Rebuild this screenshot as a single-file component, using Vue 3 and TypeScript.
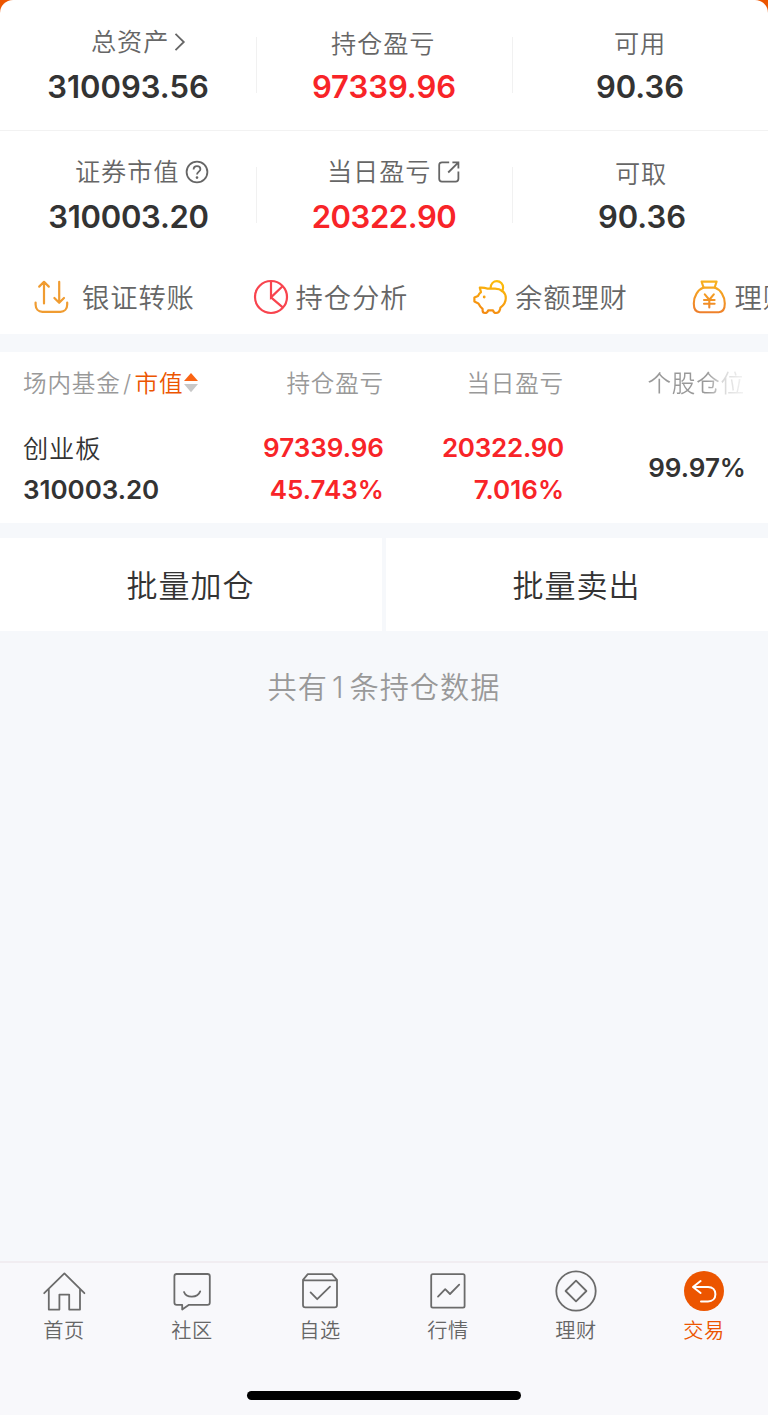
<script setup lang="ts">
interface Metric {
  key: string
  label: string
  value: string
  up?: boolean
  icon?: 'arrow' | 'help' | 'share'
}

interface Tab {
  key: string
  label: string
  active?: boolean
}

const summary: Metric[][] = [
  [
    { key: 'total', label: '总资产', value: '310093.56', icon: 'arrow' },
    { key: 'profit', label: '持仓盈亏', value: '97339.96', up: true },
    { key: 'usable', label: '可用', value: '90.36' },
  ],
  [
    { key: 'market', label: '证券市值', value: '310003.20', icon: 'help' },
    { key: 'today', label: '当日盈亏', value: '20322.90', up: true, icon: 'share' },
    { key: 'cash', label: '可取', value: '90.36' },
  ],
]

const tabs: Tab[] = [
  { key: 'home', label: '首页' },
  { key: 'community', label: '社区' },
  { key: 'watch', label: '自选' },
  { key: 'quotes', label: '行情' },
  { key: 'wealth', label: '理财' },
  { key: 'trade', label: '交易', active: true },
]
</script>

<template>
  <div class="screen">
    <div class="backdrop">
      <section class="summary">
        <div v-for="(row, r) in summary" :key="r" class="summary-row">
          <div v-for="m in row" :key="m.key" class="metric" :class="m.key">
            <div class="metric-label">
              <span>{{ m.label }}</span>
              <svg v-if="m.icon === 'arrow'" class="i-arrow" width="12" height="20" viewBox="0 0 12 20">
                <path d="M1.5 1.8L9.8 10L1.5 18.2" />
              </svg>
              <svg v-if="m.icon === 'help'" class="i-help" width="24" height="24" viewBox="0 0 24 24">
                <circle cx="12" cy="12" r="10.4" />
                <path d="M8.6 9.6C8.6 7.5 10 6.2 12 6.2S15.4 7.5 15.4 9.3C15.4 11.6 12 11.8 12 14.6" />
                <circle class="dot" cx="12" cy="17.6" r="1.3" />
              </svg>
              <svg v-if="m.icon === 'share'" class="i-share" width="24" height="24" viewBox="0 0 24 24">
                <path d="M12.2 2.3H5C3.3 2.3 2.2 3.3 2.2 5V18.8C2.2 20.5 3.3 21.6 5 21.6H18.6C20.3 21.6 21.4 20.5 21.4 18.8V11.6M15.4 2.3H21.4V8.4M21.4 2.3L11.2 12.5" />
              </svg>
            </div>
            <div class="metric-value num" :class="{ up: m.up }">{{ m.value }}</div>
          </div>
        </div>
      </section>
    </div>

    <nav class="actions">
      <div class="action transfer">
        <svg width="36" height="36" viewBox="0 0 36 36" fill="none" stroke="#f09c31" stroke-width="2.2" stroke-linecap="round" stroke-linejoin="round">
          <path d="M11 24.5V3M6.2 7.6L11 2.8L15.8 7.6M26.2 2.8V23.6M21.4 19L26.2 23.8L31 19" />
          <path d="M2.6 23.5V25.5C2.6 30 5.4 32.8 9.4 32.8H27.4C31.4 32.8 34.2 30 34.2 25.5V23.5" />
        </svg>
        <span>银证转账</span>
      </div>
      <div class="action analysis">
        <svg width="36" height="36" viewBox="0 0 36 36" fill="none" stroke="#f8444e" stroke-width="2.2">
          <circle cx="18" cy="18" r="16" />
          <path d="M18 2V18.4L29.8 7M18 18.4L29.7 28.4" />
        </svg>
        <span>持仓分析</span>
      </div>
      <div class="action piggy">
        <svg width="36" height="36" viewBox="0 0 36 36" fill="none" stroke="url(#pig)" stroke-width="2.2" stroke-linejoin="round" stroke-linecap="round">
          <defs>
            <linearGradient id="pig" gradientUnits="userSpaceOnUse" x1="25" y1="2" x2="14" y2="34">
              <stop offset="0" stop-color="#fcbd0b" />
              <stop offset="1" stop-color="#f48b12" />
            </linearGradient>
          </defs>
          <path d="M19 9.6H15C13 8.6 11 8.4 7.8 8.6L9 13.2C7.4 14.5 6.6 15.6 6 17L2.4 18.6V22.6L6.4 24.4C7.4 26.8 8.8 28.4 10.6 29.8V31.6C10.6 33.2 11.6 34 13 34C14.6 34 15.6 33.2 16.2 31.4H21C21.6 33.2 22.6 34 24 34C25.8 34 27.4 33.2 28 30.6L28.4 28.6C31.8 26.2 33.8 22.8 33.8 19C33.8 13.4 28.8 9.6 23 9.6H19" />
          <path d="M18.6 9C18.8 4.9 21.4 2.1 24.9 2.1C28.4 2.1 31.1 4.9 31.1 8.4C31.1 9.8 30.6 11.2 29.8 12.2" />
          <circle cx="12.2" cy="18" r=".8" fill="#f7a50f" stroke-width="1.2" />
        </svg>
        <span>余额理财</span>
      </div>
      <div class="action bag">
        <svg width="36" height="36" viewBox="0 0 36 36" fill="none" stroke="url(#bag)" stroke-width="2.1" stroke-linejoin="round" stroke-linecap="round">
          <defs>
            <linearGradient id="bag" gradientUnits="userSpaceOnUse" x1="20" y1="2" x2="16" y2="34">
              <stop offset="0" stop-color="#f8b31e" />
              <stop offset="1" stop-color="#ee7f2b" />
            </linearGradient>
          </defs>
          <path d="M9.6 2.6H24.6L22.6 8.6H11.6Z" />
          <path d="M11.6 8.6C5.8 10.8 1.8 17 1.8 24.6C1.8 30 3.8 33.2 7.8 33.2H26.8C31 33.2 32.8 30 32.8 24.6C32.8 17 28.6 10.8 22.6 8.6" />
          <path d="M12.8 15.4L17.3 20.7L21.8 15.4M17.3 20.7V28.4M12 21H22.6M12 24.8H22.6" />
        </svg>
        <span>理财</span>
      </div>
    </nav>

    <section class="holdings">
      <div class="grid head">
        <div class="sort">
          <span>场内基金</span><span class="slash">/</span><span class="sorted">市值</span>
          <svg width="14" height="20" viewBox="0 0 14 20">
            <path d="M7 0L14 8H0Z" fill="#fa6414" />
            <path d="M0 11H14L7 19.2Z" fill="#c8c8c8" />
          </svg>
        </div>
        <div class="right">持仓盈亏</div>
        <div class="right">当日盈亏</div>
        <div class="right fade">个股仓位</div>
      </div>
      <div class="grid item">
        <div class="stack">
          <span class="name">创业板</span>
          <span class="num worth">310003.20</span>
        </div>
        <div class="stack right up num"><span>97339.96</span><span>45.743%</span></div>
        <div class="stack right up num"><span class="day">20322.90</span><span>7.016%</span></div>
        <div class="ratio right num">99.97%</div>
      </div>
    </section>

    <div class="batch">
      <button type="button">批量加仓</button>
      <button type="button">批量卖出</button>
    </div>

    <p class="count">共有<span>1</span>条持仓数据</p>

    <footer class="tabbar">
      <div class="tabs">
        <div v-for="t in tabs" :key="t.key" class="tab" :class="{ active: t.active }">
          <svg width="44" height="44" viewBox="0 0 44 44">
            <template v-if="t.key === 'home'">
              <path d="M2.2 23.2L22.4 3.4L42.4 23.2M6.8 18.8V39.6H17.4V24.6H27.2V39.6H38V18.8" />
            </template>
            <template v-else-if="t.key === 'community'">
              <path d="M6 4H37.4Q39.8 4 39.8 6.2V32.4Q39.8 34.8 37.4 34.8H19L12.2 39.6V34.8H6.8Q4.4 34.8 4.4 32.4V6.2Q4.4 4 6.8 4" />
              <path d="M14 22C16.4 28.3 27.6 28.3 30.2 21.4" />
            </template>
            <template v-else-if="t.key === 'watch'">
              <path d="M9.8 4.2H34L39 9.8V35Q39 37.4 36.6 37.4H7.4Q5 37.4 5 35V9.8ZM5 10.4H39" />
              <path d="M12.6 22.4L19.2 29.2L32 16.6" />
            </template>
            <template v-else-if="t.key === 'quotes'">
              <rect x="5.2" y="4.2" width="33.4" height="33.4" rx="1.6" />
              <path d="M12 26.6L19.2 19.2L24 24L33.2 14.6" />
            </template>
            <template v-else-if="t.key === 'wealth'">
              <circle cx="22" cy="21" r="19.7" />
              <path d="M22 10.6L32.4 21L22 31.4L11.6 21Z" />
            </template>
            <template v-else>
              <circle class="disc" cx="22" cy="21" r="20" />
              <path class="back" d="M18.6 11L11 17L18.6 23M11.6 17H26C30.6 17 33.4 20 33.4 24.2C33.4 28.4 30.6 31.4 26 31.4H19" />
            </template>
          </svg>
          <span>{{ t.label }}</span>
        </div>
      </div>
      <div class="indicator"></div>
    </footer>
  </div>
</template>

<style>
html,
body {
  margin: 0;
  background: #fff;
}
</style>

<style scoped>
.screen {
  width: 768px;
  height: 1415px;
  overflow: hidden;
  display: flex;
  flex-direction: column;
  background: #f6f8fb;
  color: #333;
  font-family: Inter, "Noto Sans CJK SC", sans-serif;
  font-weight: 350;
}
.num {
  font-family: Inter, sans-serif;
  font-weight: 600;
}
.up {
  color: #f82428;
}
.right {
  text-align: right;
}
svg {
  flex: none;
}
.backdrop {
  background: #ec5500;
}
.summary {
  height: 260px;
  background: #fff;
  border-radius: 13px 13px 0 0;
}
.summary-row {
  height: 130px;
  display: grid;
  grid-template-columns: repeat(3, 256px);
  box-sizing: border-box;
}
.summary-row + .summary-row {
  border-top: 1px solid #f2f2f2;
}
.metric {
  height: 130px;
  display: flex;
  flex-direction: column;
  background: linear-gradient(#f1f1f1, #f1f1f1) no-repeat 0 37px / 1px 56px;
}
.metric:first-child {
  background: none;
}
.summary-row + .summary-row .metric {
  margin-top: -1px;
}
.metric-label {
  height: 36px;
  margin-top: 24px;
  display: flex;
  align-items: center;
  font-size: 25.2px;
  letter-spacing: 0.9px;
  color: #666;
  line-height: 36px;
}
.metric-label svg {
  fill: none;
  stroke: #666;
  stroke-width: 1.8;
}
.metric-label .dot {
  fill: #666;
  stroke: none;
}
.total .metric-label { padding-left: 91px; }
.profit .metric-label { padding-left: 75px; margin-top: 26px; }
.usable .metric-label { padding-left: 102px; margin-top: 26px; }
.market .metric-label { padding-left: 75px; }
.today .metric-label { padding-left: 71px; }
.cash .metric-label { padding-left: 103px; margin-top: 26px; }
.i-arrow { margin-left: 5px; }
.i-help { margin-left: 6px; }
.i-share { margin-left: 6px; }
.metric-value {
  margin-top: 7px;
  height: 40px;
  line-height: 40px;
  font-size: 31px;
  text-align: center;
}
.profit .metric-value,
.usable .metric-value,
.cash .metric-value {
  margin-top: 5px;
}
.market .metric-value {
  letter-spacing: -0.25px;
  padding-left: 1px;
}
.today .metric-value {
  letter-spacing: -0.4px;
}
.cash .metric-value {
  padding-left: 4px;
}
.actions {
  height: 74px;
  display: grid;
  grid-template-columns: repeat(4, 219.5px);
  padding-left: 33px;
  background: #fff;
  flex: none;
  overflow: hidden;
}
.action {
  height: 74px;
  display: flex;
  align-items: center;
  gap: 7px;
  font-size: 27.3px;
  letter-spacing: 0.9px;
  color: #666;
  white-space: nowrap;
}
.action span {
  padding-bottom: 2px;
}
.transfer {
  gap: 13px;
}
.holdings {
  margin-top: 18px;
  height: 171px;
  background: #fff;
  flex: none;
}
.grid {
  display: grid;
  grid-template-columns: 210px 151px 180px 181px;
  padding: 0 24px 0 23px;
}
.head {
  height: 62px;
  line-height: 64px;
  font-size: 23.6px;
  letter-spacing: 0.8px;
  color: #999;
}
.sort {
  height: 64px;
  display: flex;
  align-items: center;
}
.sort svg {
  margin: 0 0 2px 1px;
}
.slash {
  padding: 0 2.5px;
}
.sorted {
  color: #ec5500;
}
.fade {
  margin-left: 80px;
  color: transparent;
  background: linear-gradient(90deg, #999 62%, #d8d8d8 78%, #f4f4f4);
  background-clip: text;
  -webkit-background-clip: text;
}
.item {
  height: 108px;
}
.item .num {
  font-size: 26px;
}
.stack {
  display: flex;
  flex-direction: column;
  padding-top: 13px;
}
.stack span {
  height: 42px;
  line-height: 42px;
}
.stack .name {
  font-size: 25.2px;
  letter-spacing: 0.9px;
  line-height: 44px;
}
.worth {
  letter-spacing: -0.05px;
}
.day {
  letter-spacing: -0.25px;
}
.ratio {
  margin-right: -1px;
  line-height: 108px;
}
.batch {
  flex: none;
  margin-top: 15px;
  height: 93px;
  display: grid;
  grid-template-columns: 382px 382px;
  gap: 4px;
}
button {
  border: 0;
  padding: 0 1px 2px 0;
  margin: 0;
  background: #fff;
  font: inherit;
  font-size: 31px;
  letter-spacing: 1px;
  color: #333;
}
.count {
  margin: 36px 0 0;
  height: 42px;
  line-height: 42px;
  text-align: center;
  font-size: 29.2px;
  letter-spacing: 1px;
  color: #999;
}
.count span {
  padding: 0 5px 0 4px;
}
.tabbar {
  margin-top: auto;
  height: 154px;
  box-sizing: border-box;
  border-top: 2px solid #f1edf1;
  background: #f8f8fb;
}
.tabs {
  display: grid;
  grid-template-columns: repeat(6, 128px);
}
.tab {
  padding-top: 7px;
  display: flex;
  flex-direction: column;
  align-items: center;
  color: #666;
  font-size: 20.2px;
  letter-spacing: 0.6px;
  line-height: 33px;
}
.tab svg {
  fill: none;
  stroke: #6b6b6b;
  stroke-width: 1.8;
  stroke-linejoin: round;
  stroke-linecap: round;
}
.tab .disc {
  fill: #ec5500;
  stroke: none;
}
.tab .back {
  stroke: #fff;
  stroke-width: 2;
}
.active {
  color: #ec5500;
}
.indicator {
  width: 274px;
  height: 9px;
  margin: 44px auto 0;
  border-radius: 5px;
  background: #000;
}
</style>
